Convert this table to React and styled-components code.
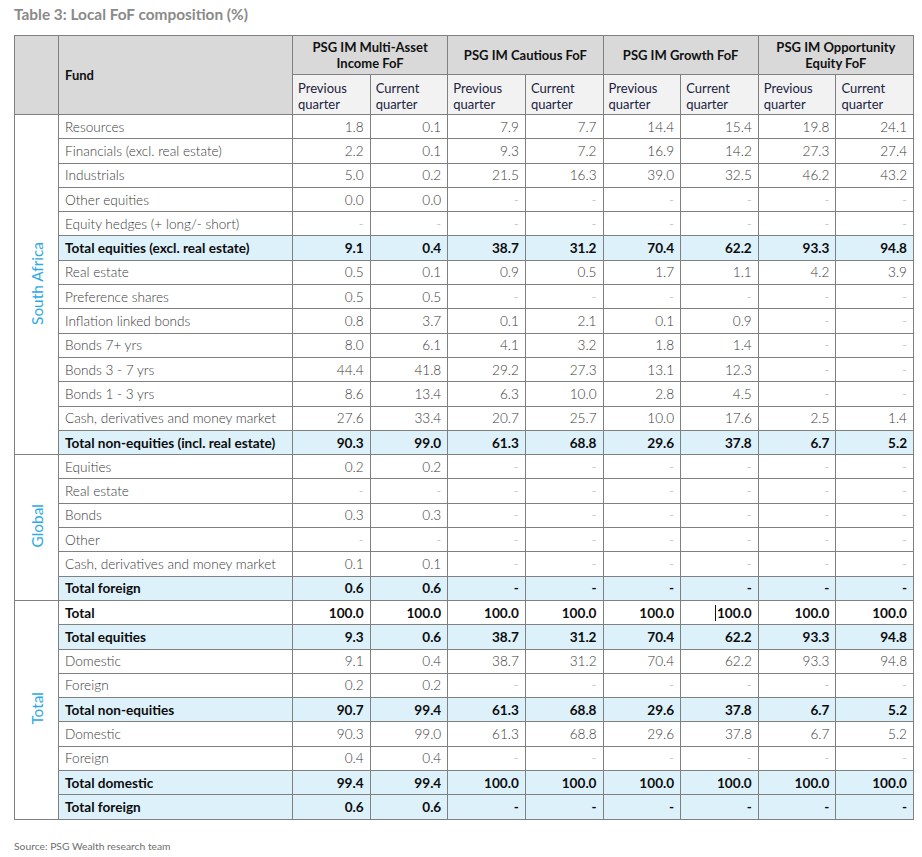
import React from "react";
import styled, { createGlobalStyle } from "styled-components";

const GlobalStyle = createGlobalStyle`
  html, body {
    margin: 0;
    padding: 0;
    background: #fff;
    font-family: Lato, "Open Sans", Arial, sans-serif;
  }
`;

const funds = [
  ["PSG IM Multi-Asset", "Income FoF"],
  ["PSG IM Cautious FoF"],
  ["PSG IM Growth FoF"],
  ["PSG IM Opportunity", "Equity FoF"],
];

const D = "-";

const sections = [
  {
    name: "South Africa",
    rows: [
      { label: "Resources", values: ["1.8", "0.1", "7.9", "7.7", "14.4", "15.4", "19.8", "24.1"] },
      { label: "Financials (excl. real estate)", values: ["2.2", "0.1", "9.3", "7.2", "16.9", "14.2", "27.3", "27.4"] },
      { label: "Industrials", values: ["5.0", "0.2", "21.5", "16.3", "39.0", "32.5", "46.2", "43.2"] },
      { label: "Other equities", values: ["0.0", "0.0", D, D, D, D, D, D] },
      { label: "Equity hedges (+ long/- short)", values: [D, D, D, D, D, D, D, D] },
      { label: "Total equities (excl. real estate)", total: true, values: ["9.1", "0.4", "38.7", "31.2", "70.4", "62.2", "93.3", "94.8"] },
      { label: "Real estate", values: ["0.5", "0.1", "0.9", "0.5", "1.7", "1.1", "4.2", "3.9"] },
      { label: "Preference shares", values: ["0.5", "0.5", D, D, D, D, D, D] },
      { label: "Inflation linked bonds", values: ["0.8", "3.7", "0.1", "2.1", "0.1", "0.9", D, D] },
      { label: "Bonds 7+ yrs", values: ["8.0", "6.1", "4.1", "3.2", "1.8", "1.4", D, D] },
      { label: "Bonds 3 - 7 yrs", values: ["44.4", "41.8", "29.2", "27.3", "13.1", "12.3", D, D] },
      { label: "Bonds 1 - 3 yrs", values: ["8.6", "13.4", "6.3", "10.0", "2.8", "4.5", D, D] },
      { label: "Cash, derivatives and money market", values: ["27.6", "33.4", "20.7", "25.7", "10.0", "17.6", "2.5", "1.4"] },
      { label: "Total non-equities (incl. real estate)", total: true, values: ["90.3", "99.0", "61.3", "68.8", "29.6", "37.8", "6.7", "5.2"] },
    ],
  },
  {
    name: "Global",
    rows: [
      { label: "Equities", values: ["0.2", "0.2", D, D, D, D, D, D] },
      { label: "Real estate", values: [D, D, D, D, D, D, D, D] },
      { label: "Bonds", values: ["0.3", "0.3", D, D, D, D, D, D] },
      { label: "Other", values: [D, D, D, D, D, D, D, D] },
      { label: "Cash, derivatives and money market", values: ["0.1", "0.1", D, D, D, D, D, D] },
      { label: "Total foreign", total: true, values: ["0.6", "0.6", D, D, D, D, D, D] },
    ],
  },
  {
    name: "Total",
    rows: [
      { label: "Total", bold: true, caret: 5, values: ["100.0", "100.0", "100.0", "100.0", "100.0", "100.0", "100.0", "100.0"] },
      { label: "Total equities", total: true, values: ["9.3", "0.6", "38.7", "31.2", "70.4", "62.2", "93.3", "94.8"] },
      { label: "Domestic", values: ["9.1", "0.4", "38.7", "31.2", "70.4", "62.2", "93.3", "94.8"] },
      { label: "Foreign", values: ["0.2", "0.2", D, D, D, D, D, D] },
      { label: "Total non-equities", total: true, values: ["90.7", "99.4", "61.3", "68.8", "29.6", "37.8", "6.7", "5.2"] },
      { label: "Domestic", values: ["90.3", "99.0", "61.3", "68.8", "29.6", "37.8", "6.7", "5.2"] },
      { label: "Foreign", values: ["0.4", "0.4", D, D, D, D, D, D] },
      { label: "Total domestic", total: true, values: ["99.4", "99.4", "100.0", "100.0", "100.0", "100.0", "100.0", "100.0"] },
      { label: "Total foreign", total: true, values: ["0.6", "0.6", D, D, D, D, D, D] },
    ],
  },
];

const Page = styled.div`
  padding: 5px 9px 0 14px;
  width: 899px;
`;

const Title = styled.h3`
  margin: 0 0 12px;
  font-size: 15.4px;
  line-height: 18px;
  font-weight: 700;
  color: #8a8a8a;
`;

const Table = styled.table`
  width: 899px;
  border-collapse: collapse;
  table-layout: fixed;
  font-size: 13.6px;
  color: #3a3a3a;
`;

const HeadCell = styled.th`
  border: 1px solid #808080;
  background: ${(p) => (p.$sub ? "#f2f2f2" : "#d9d9d9")};
  color: ${(p) => (p.$sub ? "#1b2340" : "#111")};
  font-weight: ${(p) => (p.$sub ? 400 : 700)};
  text-align: ${(p) => p.$align || "center"};
  vertical-align: ${(p) => (p.$sub ? "top" : "middle")};
  padding: ${(p) => (p.$sub ? "5px 5px 0" : "0 6px")};
  line-height: 16px;
  font-size: 13px;
`;

const HeadRow = styled.tr`
  height: ${(p) => p.$h}px;
`;

const Row = styled.tr`
  height: 24.31px;
  background: ${(p) => (p.$total ? "#ddf1fb" : "#fff")};
  color: ${(p) => (p.$strong ? "#0d0d0d" : "#3a3a3a")};
  font-weight: ${(p) => (p.$strong ? 700 : 300)};
`;

const SectionCell = styled.td`
  border: 1px solid #808080;
  background: #fff;
  padding: 0;
  text-align: center;
  vertical-align: middle;
`;

const SectionLabel = styled.span`
  display: inline-block;
  writing-mode: vertical-rl;
  transform: rotate(180deg);
  color: #2ca9e6;
  font-size: 15.4px;
  font-weight: 400;
  white-space: nowrap;
`;

const LabelCell = styled.td`
  border: 1px solid #808080;
  padding: 0 6px;
  text-align: left;
  white-space: nowrap;
  line-height: 16px;
`;

const NumCell = styled.td`
  border: 1px solid #808080;
  padding: 0 6px 0 4px;
  text-align: right;
  white-space: nowrap;
  line-height: 16px;
  color: ${(p) => (p.$dash && !p.$strong ? "#a8a8a8" : "inherit")};
`;

const Caret = styled.span`
  display: inline-block;
  width: 1px;
  height: 16px;
  margin-right: 1px;
  vertical-align: -3px;
  background: #111;
`;

const Source = styled.p`
  margin: 20px 0 0;
  font-size: 10.3px;
  color: #6e6e6e;
`;

export default function App() {
  return (
    <Page>
      <GlobalStyle />
      <Title>Table 3: Local FoF composition (%)</Title>
      <Table>
        <colgroup>
          <col style={{ width: 44 }} />
          <col style={{ width: 234 }} />
          {Array.from({ length: 8 }).map((_, i) => (
            <col key={i} style={{ width: 77.625 }} />
          ))}
        </colgroup>
        <thead>
          <HeadRow $h={39}>
            <HeadCell rowSpan={2} />
            <HeadCell rowSpan={2} $align="left">Fund</HeadCell>
            {funds.map((lines) => (
              <HeadCell key={lines[0]} colSpan={2}>
                {lines.map((l, i) => (
                  <React.Fragment key={l}>
                    {i > 0 && <br />}
                    {l}
                  </React.Fragment>
                ))}
              </HeadCell>
            ))}
          </HeadRow>
          <HeadRow $h={40}>
            {funds.map((f) => (
              <React.Fragment key={f[0]}>
                <HeadCell $sub $align="left">Previous<br />quarter</HeadCell>
                <HeadCell $sub $align="left">Current<br />quarter</HeadCell>
              </React.Fragment>
            ))}
          </HeadRow>
        </thead>
        <tbody>
          {sections.map((section) =>
            section.rows.map((row, ri) => {
              const strong = row.total || row.bold;
              return (
                <Row key={section.name + ri} $total={row.total} $strong={strong}>
                  {ri === 0 && (
                    <SectionCell rowSpan={section.rows.length}>
                      <SectionLabel>{section.name}</SectionLabel>
                    </SectionCell>
                  )}
                  <LabelCell>{row.label}</LabelCell>
                  {row.values.map((v, vi) => (
                    <NumCell key={vi} $dash={v === D} $strong={strong}>
                      {row.caret === vi && <Caret />}
                      {v}
                    </NumCell>
                  ))}
                </Row>
              );
            })
          )}
        </tbody>
      </Table>
      <Source>Source: PSG Wealth research team</Source>
    </Page>
  );
}
